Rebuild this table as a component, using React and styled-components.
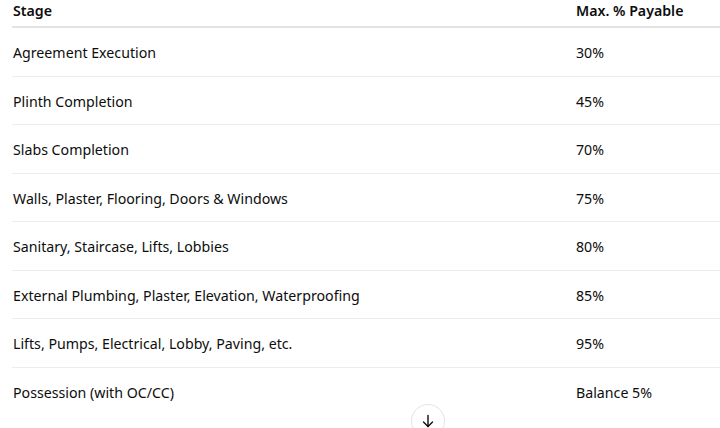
import React from "react";
import styled, { createGlobalStyle } from "styled-components";

const Global = createGlobalStyle`
  html, body { margin: 0; padding: 0; background: #fff; }
  body { font-family: "Noto Sans", "Open Sans", sans-serif; color: #0d0d0d; overflow: hidden; }
`;

const Page = styled.div`
  position: relative;
  height: 428px;
  overflow: hidden;
  padding-left: 12px;
`;

const Table = styled.table`
  width: calc(100% + 20px);
  border-collapse: collapse;
  font-size: 14.2px;
`;

const HeadCell = styled.th`
  text-align: left;
  font-weight: 600;
  padding: 1px 0 5px 1px;
  line-height: 20px;
  border-bottom: 2px solid #e3e3e3;
  width: ${(p) => (p.$second ? "auto" : "562px")};
`;

const Row = styled.tr`
  border-bottom: ${(p) => (p.$last ? "none" : "1px solid #ececec")};
`;

const Cell = styled.td`
  padding: 15px 0 13px 1px;
  line-height: 19.5px;
`;

const ScrollButton = styled.button`
  position: absolute;
  left: 411px;
  top: 404px;
  width: 34px;
  height: 34px;
  border-radius: 50%;
  border: 1px solid #e3e3e3;
  background: #fff;
  display: flex;
  align-items: flex-start;
  justify-content: center;
  padding: 8px 0 0;
  color: #0d0d0d;
`;

const rows = [
  ["Agreement Execution", "30%"],
  ["Plinth Completion", "45%"],
  ["Slabs Completion", "70%"],
  ["Walls, Plaster, Flooring, Doors & Windows", "75%"],
  ["Sanitary, Staircase, Lifts, Lobbies", "80%"],
  ["External Plumbing, Plaster, Elevation, Waterproofing", "85%"],
  ["Lifts, Pumps, Electrical, Lobby, Paving, etc.", "95%"],
  ["Possession (with OC/CC)", "Balance 5%"],
];

export default function App() {
  return (
    <>
      <Global />
      <Page>
        <Table>
          <thead>
            <tr>
              <HeadCell>Stage</HeadCell>
              <HeadCell $second>Max. % Payable</HeadCell>
            </tr>
          </thead>
          <tbody>
            {rows.map(([a, b], i) => (
              <Row key={a} $last={i === rows.length - 1}>
                <Cell>{a}</Cell>
                <Cell $second>{b}</Cell>
              </Row>
            ))}
          </tbody>
        </Table>
        <ScrollButton aria-label="Scroll down">
          <svg width="16" height="16" viewBox="0 0 16 16" fill="none" stroke="currentColor" strokeWidth="1.4" strokeLinecap="round" strokeLinejoin="round">
            <path d="M8 2.5v11" />
            <path d="M3.5 9l4.5 4.5L12.5 9" />
          </svg>
        </ScrollButton>
      </Page>
    </>
  );
}
